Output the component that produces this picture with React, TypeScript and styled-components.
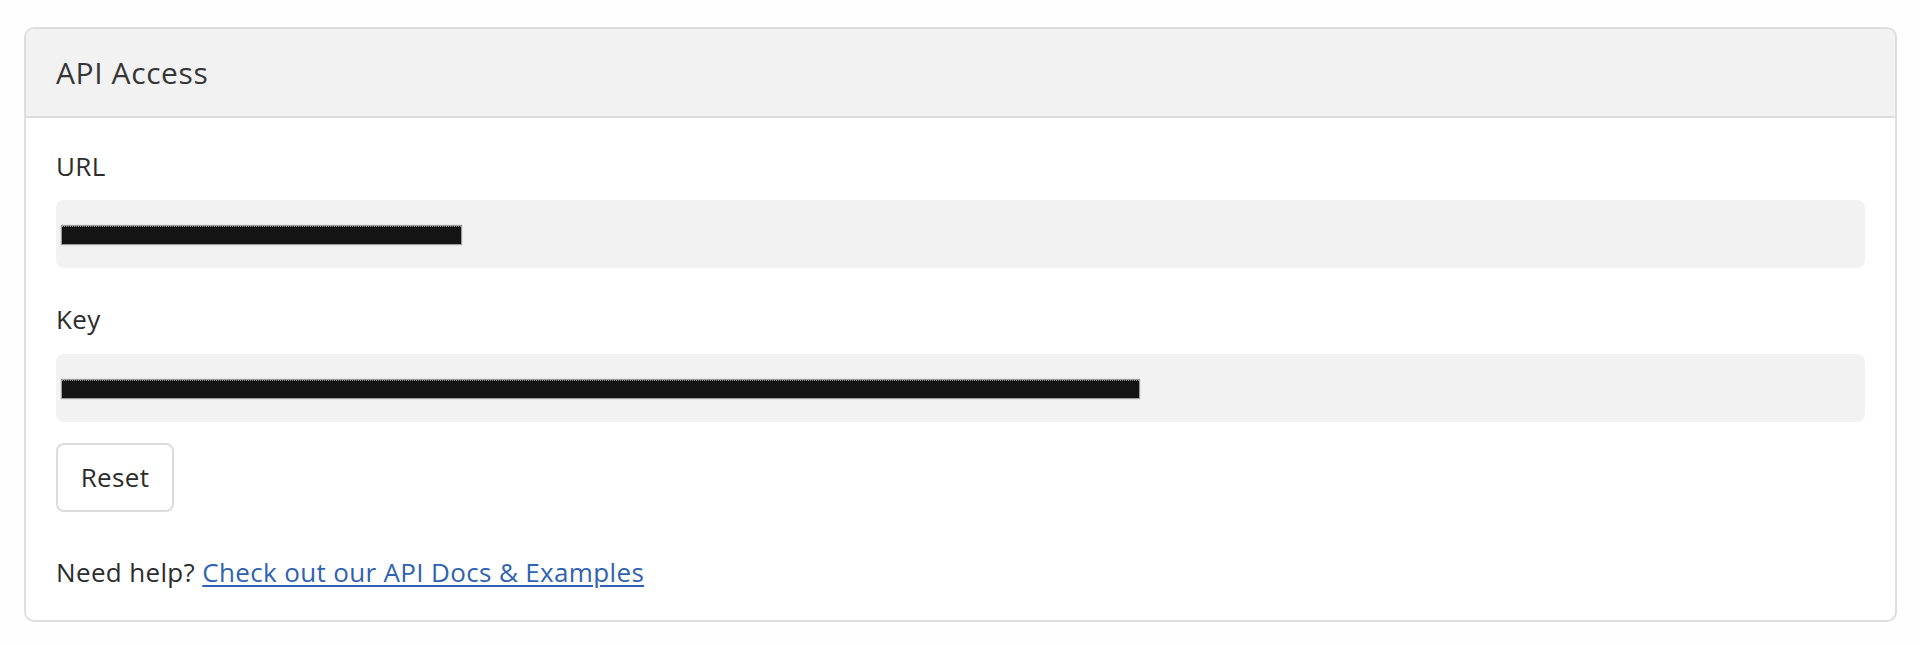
import React from "react";
import styled, { createGlobalStyle } from "styled-components";

const GlobalStyle = createGlobalStyle`
  body {
    margin: 0;
    background: #fefefe;
    font-family: "Open Sans", "Noto Sans", Arial, sans-serif;
    color: #2c2c2c;
  }
`;

const Page = styled.div`
  padding: 27px 23px 0 24px;
`;

const Panel = styled.section`
  border: 2px solid #dedede;
  border-radius: 10px;
  background: #fff;
  overflow: hidden;
`;

const PanelHeader = styled.header`
  display: flex;
  align-items: center;
  height: 87px;
  padding: 0 30px;
  background: #f2f2f2;
  border-bottom: 2px solid #dcdcdc;
  font-size: 30px;
  letter-spacing: 0.6px;
  color: #363636;
`;

const PanelBody = styled.div`
  display: flex;
  flex-direction: column;
  align-items: flex-start;
  padding: 30px 30px 30px;
  font-size: 26px;
  line-height: 1.4;
  letter-spacing: 0.35px;
`;

const Label = styled.label<{ gap?: number }>`
  margin-top: ${(p) => p.gap ?? 0}px;
  color: #2c2c2c;
`;

const Field = styled.div`
  display: flex;
  align-items: center;
  align-self: stretch;
  height: 68px;
  margin-top: 16px;
  padding: 0 6px;
  background: #f2f2f2;
  border-radius: 8px;
`;

const Redacted = styled.span<{ size: number }>`
  display: block;
  width: ${(p) => p.size}px;
  height: 17px;
  margin-top: 2px;
  background: #141414;
  border-top: 1px dotted #888;
  box-shadow: 0 0 1px 1px rgba(0, 0, 0, 0.35);
`;

const ResetButton = styled.button`
  display: flex;
  align-items: center;
  justify-content: center;
  width: 118px;
  height: 69px;
  margin-top: 21px;
  background: #fff;
  border: 2px solid #dcdcdc;
  border-radius: 8px;
  font-family: inherit;
  font-size: 26px;
  letter-spacing: 0.35px;
  color: #2c2c2c;
  cursor: pointer;
`;

const Help = styled.p`
  margin: 42px 0 0;
  color: #2c2c2c;
`;

const DocsLink = styled.a`
  color: #2f63b2;
  text-decoration: underline;
  text-underline-offset: 3px;
`;

export default function App() {
  return (
    <>
      <GlobalStyle />
      <Page>
        <Panel>
          <PanelHeader>API Access</PanelHeader>
          <PanelBody>
            <Label>URL</Label>
            <Field>
              <Redacted size={399} />
            </Field>
            <Label gap={33}>Key</Label>
            <Field>
              <Redacted size={1077} />
            </Field>
            <ResetButton>Reset</ResetButton>
            <Help>
              Need help? <DocsLink href="#">Check out our API Docs &amp; Examples</DocsLink>
            </Help>
          </PanelBody>
        </Panel>
      </Page>
    </>
  );
}
